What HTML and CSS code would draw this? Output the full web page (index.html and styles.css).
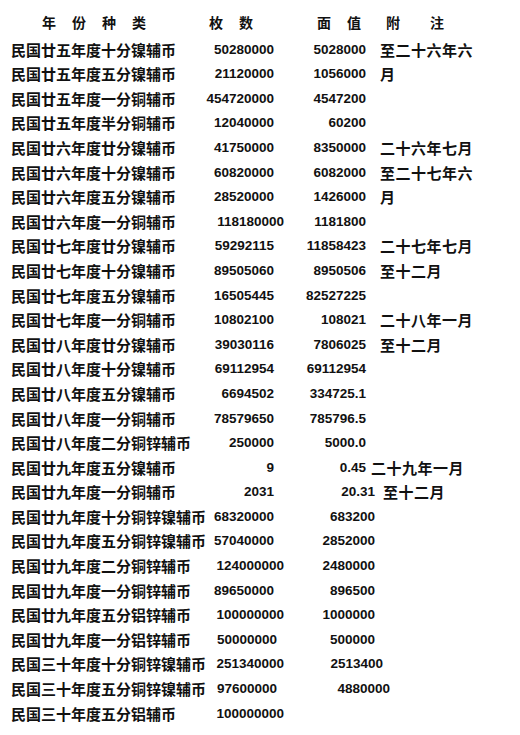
FILE: index.html
```html
<!DOCTYPE html>
<html lang="zh">
<head>
<meta charset="utf-8">
<title>辅币铸造统计</title>
<link rel="stylesheet" href="styles.css">
</head>
<body>
<div class="sheet">
  <div class="head">
    <span class="h-name">年份种类</span>
    <span class="h-count">枚数</span>
    <span class="h-value">面值</span>
    <span class="h-note">附注</span>
  </div>

  <div class="row"><span class="name">民国廿五年度十分镍辅币</span><span class="count">50280000</span><span class="value">5028000</span><span class="note">至二十六年六</span></div>
  <div class="row"><span class="name">民国廿五年度五分镍辅币</span><span class="count">21120000</span><span class="value">1056000</span><span class="note">月</span></div>
  <div class="row"><span class="name">民国廿五年度一分铜辅币</span><span class="count">454720000</span><span class="value">4547200</span><span class="note"></span></div>
  <div class="row"><span class="name">民国廿五年度半分铜辅币</span><span class="count">12040000</span><span class="value">60200</span><span class="note"></span></div>
  <div class="row"><span class="name">民国廿六年度廿分镍辅币</span><span class="count">41750000</span><span class="value">8350000</span><span class="note">二十六年七月</span></div>
  <div class="row"><span class="name">民国廿六年度十分镍辅币</span><span class="count">60820000</span><span class="value">6082000</span><span class="note">至二十七年六</span></div>
  <div class="row"><span class="name">民国廿六年度五分镍辅币</span><span class="count">28520000</span><span class="value">1426000</span><span class="note">月</span></div>
  <div class="row"><span class="name">民国廿六年度一分铜辅币</span><span class="count wide">118180000</span><span class="value">1181800</span><span class="note"></span></div>
  <div class="row"><span class="name">民国廿七年度廿分镍辅币</span><span class="count">59292115</span><span class="value">11858423</span><span class="note">二十七年七月</span></div>
  <div class="row"><span class="name">民国廿七年度十分镍辅币</span><span class="count">89505060</span><span class="value">8950506</span><span class="note">至十二月</span></div>
  <div class="row"><span class="name">民国廿七年度五分镍辅币</span><span class="count">16505445</span><span class="value">82527225</span><span class="note"></span></div>
  <div class="row"><span class="name">民国廿七年度一分铜辅币</span><span class="count">10802100</span><span class="value">108021</span><span class="note">二十八年一月</span></div>
  <div class="row"><span class="name">民国廿八年度廿分镍辅币</span><span class="count">39030116</span><span class="value">7806025</span><span class="note">至十二月</span></div>
  <div class="row"><span class="name">民国廿八年度十分镍辅币</span><span class="count">69112954</span><span class="value">69112954</span><span class="note"></span></div>
  <div class="row"><span class="name">民国廿八年度五分镍辅币</span><span class="count">6694502</span><span class="value">334725.1</span><span class="note"></span></div>
  <div class="row"><span class="name">民国廿八年度一分铜辅币</span><span class="count">78579650</span><span class="value">785796.5</span><span class="note"></span></div>
  <div class="row"><span class="name">民国廿八年度二分铜锌辅币</span><span class="count">250000</span><span class="value">5000.0</span><span class="note"></span></div>
  <div class="row"><span class="name">民国廿九年度五分镍辅币</span><span class="count">9</span><span class="value">0.45</span><span class="note tight">二十九年一月</span></div>
  <div class="row"><span class="name">民国廿九年度一分铜辅币</span><span class="count">2031</span><span class="value v2">20.31</span><span class="note loose">至十二月</span></div>
  <div class="row"><span class="name">民国廿九年度十分铜锌镍辅币</span><span class="count">68320000</span><span class="value v2">683200</span><span class="note"></span></div>
  <div class="row"><span class="name">民国廿九年度五分铜锌镍辅币</span><span class="count">57040000</span><span class="value v2">2852000</span><span class="note"></span></div>
  <div class="row"><span class="name">民国廿九年度二分铜锌辅币</span><span class="count wide">124000000</span><span class="value v2">2480000</span><span class="note"></span></div>
  <div class="row"><span class="name">民国廿九年度一分铜锌辅币</span><span class="count">89650000</span><span class="value v2">896500</span><span class="note"></span></div>
  <div class="row"><span class="name">民国廿九年度五分铝锌辅币</span><span class="count wide">100000000</span><span class="value v2">1000000</span><span class="note"></span></div>
  <div class="row"><span class="name">民国廿九年度一分铝锌辅币</span><span class="count mid">50000000</span><span class="value v2">500000</span><span class="note"></span></div>
  <div class="row"><span class="name">民国三十年度十分铜锌镍辅币</span><span class="count wide">251340000</span><span class="value v3">2513400</span><span class="note"></span></div>
  <div class="row"><span class="name">民国三十年度五分铜锌镍辅币</span><span class="count mid">97600000</span><span class="value v4">4880000</span><span class="note"></span></div>
  <div class="row"><span class="name">民国三十年度五分铝辅币</span><span class="count wide">100000000</span><span class="value"></span><span class="note"></span></div>
</div>
</body>
</html>
```

FILE: styles.css
```css
html, body {
  margin: 0;
  padding: 0;
  background: #ffffff;
}

body {
  width: 520px;
  height: 735px;
  overflow: hidden;
  color: #111111;
  font-family: "Noto Sans CJK SC", "Liberation Sans", sans-serif;
}

.sheet {
  padding: 10px 0 0 11px;
}

.head,
.row {
  display: grid;
  grid-template-columns: 190px 84px 83px 1fr;
  column-gap: 0;
  height: 24.6px;
  line-height: 24.6px;
  white-space: nowrap;
}

.head {
  margin-bottom: 3px;
  font-size: 14px;
  font-weight: 700;
}

.h-name {
  padding-left: 31px;
  letter-spacing: 16px;
}

.h-count {
  padding-left: 8px;
  letter-spacing: 16px;
}

.h-value {
  padding-left: 32px;
  letter-spacing: 16px;
}

.h-note {
  padding-left: 18px;
  letter-spacing: 30px;
}

.name {
  font-size: 15px;
  font-weight: 700;
  letter-spacing: 0;
  overflow: visible;
}

.count,
.value {
  font-family: "Liberation Sans", Arial, sans-serif;
  font-size: 13.5px;
  font-weight: 700;
  text-align: right;
  letter-spacing: 0;
}

.count {
  padding-right: 11px;
}

.count.wide {
  padding-right: 1px;
}

.count.mid {
  padding-right: 8px;
}

.value {
  padding-right: 2px;
}

.value.v2 {
  margin-right: -9px;
}

.value.v3 {
  margin-right: -17px;
}

.value.v4 {
  margin-right: -24px;
}

.note {
  padding-left: 12px;
  font-size: 15px;
  font-weight: 700;
  letter-spacing: 0.5px;
}

.note.tight {
  padding-left: 3px;
}

.note.loose {
  padding-left: 15px;
}
```
